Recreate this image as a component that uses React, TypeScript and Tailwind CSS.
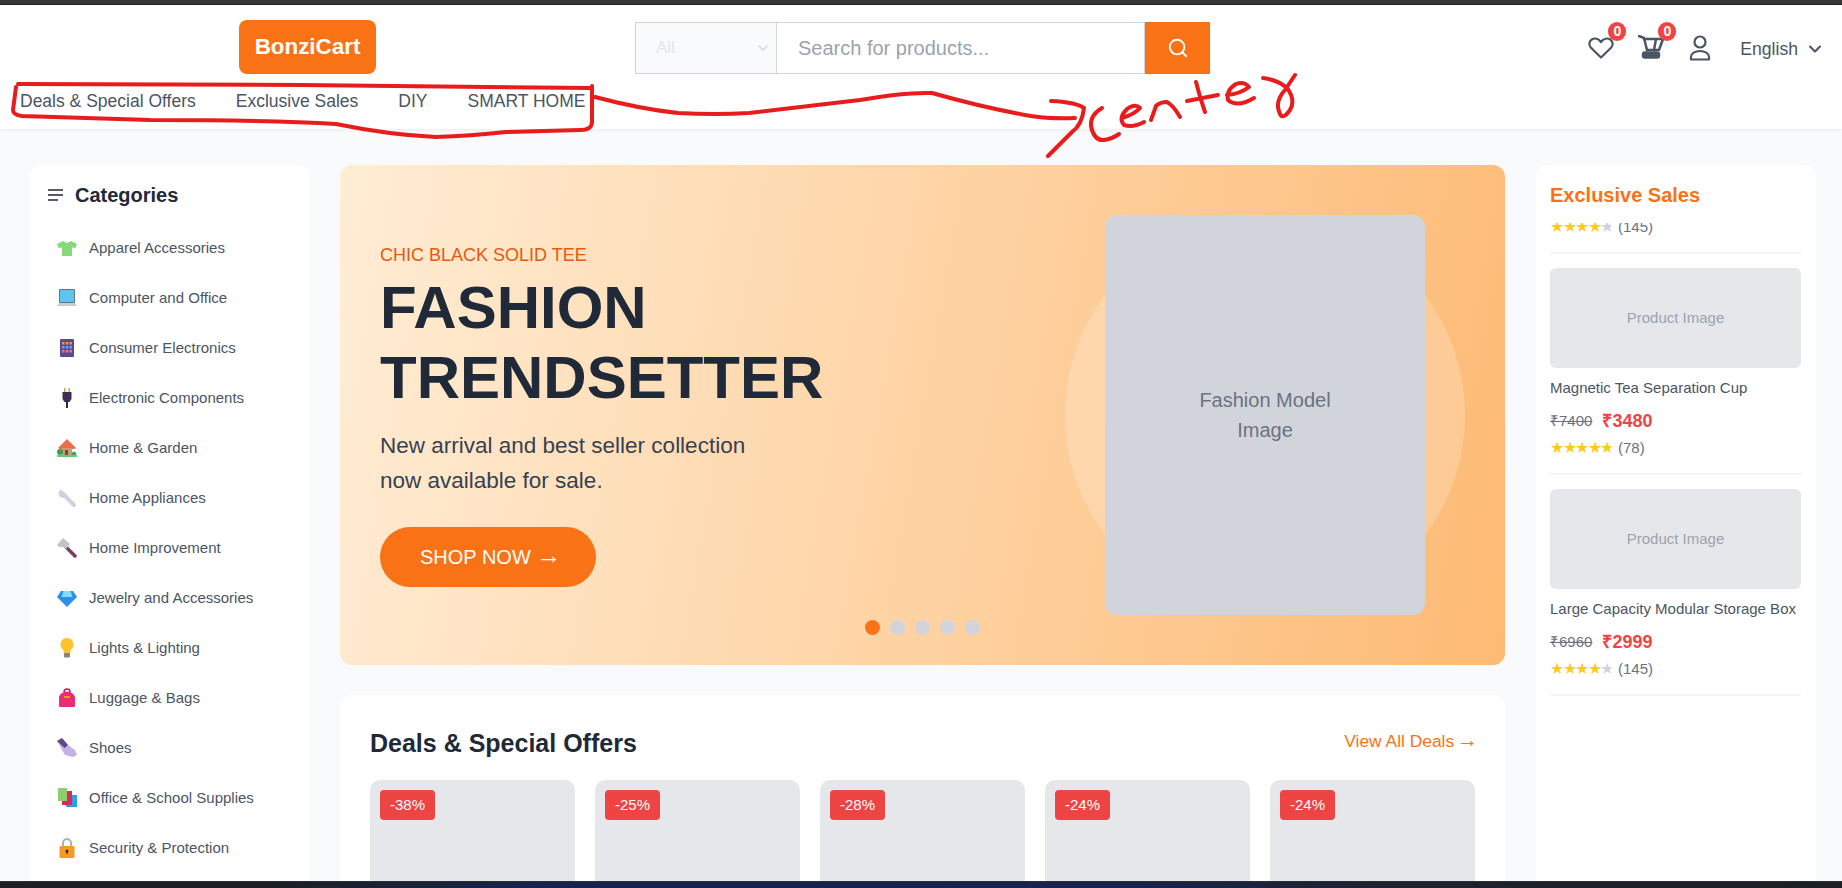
import { Search, ChevronDown } from 'lucide-react';

const categories: { name: string; icon: React.ReactNode }[] = [
  {
    name: 'Apparel Accessories',
    icon: <path d="M6 3 0 6l1.500 4L5 9.500V18h10V9.500l3.500.5L20 6l-6-3-4 2z" fill="#86d97a" />,
  },
  {
    name: 'Computer and Office',
    icon: (
      <>
        <rect x="2" y="1" width="16" height="14" rx="1" fill="#64748b" />
        <rect x="3" y="2" width="14" height="12" fill="#5cc4f0" />
        <path d="M2 15h16l2 3H0z" fill="#c9cbd6" />
      </>
    ),
  },
  {
    name: 'Consumer Electronics',
    icon: (
      <>
        <rect x="3" y="1" width="14" height="18" rx="1" fill="#5b4a93" />
        <path d="M5 4h2.500v2.500H5zM8.800 4h2.500v2.500H8.800zM12.500 4H15v2.500h-2.500z" fill="#f59e0b" />
        <path d="M5 8h2.500v2.500H5zM8.800 8h2.500v2.500H8.800zM12.500 8H15v2.500h-2.500z" fill="#60a5fa" />
        <path d="M5 12h2.500v2.500H5zM8.800 12h2.500v2.500H8.800zM12.500 12H15v2.500h-2.500z" fill="#f87171" />
      </>
    ),
  },
  {
    name: 'Electronic Components',
    icon: (
      <>
        <path d="M7 0h1.500v5H7zM11.500 0H13v5h-1.500z" fill="#d6a25a" />
        <path d="M5.500 4h9v7l-2 3h-5l-2-3z" fill="#3f2d56" />
        <rect x="9" y="13" width="2" height="7" fill="#2d2d38" />
      </>
    ),
  },
  {
    name: 'Home & Garden',
    icon: (
      <>
        <path d="M1 10 10 1l9 9-2 1H3z" fill="#ef6c4a" />
        <rect x="5" y="10" width="10" height="8" fill="#c99a6b" />
        <rect x="8" y="12" width="3" height="6" fill="#7a4a2b" />
        <rect x="12" y="11" width="2.500" height="2.500" fill="#5cc4f0" />
        <circle cx="3" cy="14" r="3" fill="#3f9b52" />
        <circle cx="17" cy="16" r="2.200" fill="#3f9b52" />
        <path d="M0 17h20v2H0z" fill="#5fce76" />
      </>
    ),
  },
  {
    name: 'Home Appliances',
    icon: (
      <>
        <path d="M5 5 17 17" stroke="#d4cfe0" strokeWidth="4" strokeLinecap="round" />
        <path d="M1 5 4 1l1.500 3L8 6l3-.5L7 10 3 9z" fill="#d4cfe0" />
      </>
    ),
  },
  {
    name: 'Home Improvement',
    icon: (
      <>
        <path d="M8 8 18 18" stroke="#7b3f54" strokeWidth="3.500" strokeLinecap="round" />
        <path d="M0 7 6 0l7 6-4 5-3-2.500-3 1z" fill="#c4c2cc" />
      </>
    ),
  },
  {
    name: 'Jewelry and Accessories',
    icon: (
      <>
        <path d="M4 3h12l4 6-10 10L0 9z" fill="#2f8fe8" />
        <path d="M6.500 3h7l2 6H4.500z" fill="#7fdcfb" />
      </>
    ),
  },
  {
    name: 'Lights & Lighting',
    icon: (
      <>
        <path d="M10 0a6.500 6.500 0 0 1 3.500 12V15h-7v-3A6.500 6.500 0 0 1 10 0z" fill="#fbc531" />
        <rect x="7" y="15" width="6" height="4.500" rx="1" fill="#8d7a9e" />
      </>
    ),
  },
  {
    name: 'Luggage & Bags',
    icon: (
      <>
        <path d="M7 4a3 3 0 0 1 6 0" fill="none" stroke="#c2185b" strokeWidth="1.500" />
        <path d="M2 10a8 6.500 0 0 1 16 0v8a1 1 0 0 1-1 1H3a1 1 0 0 1-1-1z" fill="#ec2a77" />
        <rect x="7" y="8" width="6" height="2" fill="#f59e0b" />
      </>
    ),
  },
  {
    name: 'Shoes',
    icon: (
      <>
        <path d="M0 3 5 0l6 7 7 5 2 5-4 2-8-2z" fill="#c4b0e4" />
        <path d="M0 3 5 0l6 7-3.500 3z" fill="#5f4b8b" />
      </>
    ),
  },
  {
    name: 'Office & School Supplies',
    icon: (
      <>
        <rect x="9" y="7" width="11" height="12" fill="#2f9ee8" />
        <rect x="5" y="3" width="10" height="14" fill="#d82b5c" />
        <rect x="1" y="0" width="9" height="13" fill="#8ccf6b" />
      </>
    ),
  },
  {
    name: 'Security & Protection',
    icon: (
      <>
        <path d="M6 9V5a4 4 0 0 1 8 0v4" fill="none" stroke="#b3b0bd" strokeWidth="2" />
        <rect x="2.500" y="8" width="15" height="12" rx="1" fill="#f59a23" />
        <circle cx="10" cy="13" r="1.500" fill="#3b2a20" />
        <rect x="9.400" y="13" width="1.200" height="3" fill="#3b2a20" />
      </>
    ),
  },
];

const navLinks = ['Deals & Special Offers', 'Exclusive Sales', 'DIY', 'SMART HOME'];
const discounts = ['-38%', '-25%', '-28%', '-24%', '-24%'];

const sideProducts = [
  { name: 'Magnetic Tea Separation Cup', oldPrice: '₹7400', price: '₹3480', stars: 5, reviews: 78 },
  { name: 'Large Capacity Modular Storage Box', oldPrice: '₹6960', price: '₹2999', stars: 4, reviews: 145 },
];

function Rating({ stars, reviews }: { stars: number; reviews: number }) {
  return (
    <div className="flex items-center h-5 text-[15px] text-[#6b7280]">
      <span className="text-[16px] leading-5 tracking-[-1.400px] text-[#facc15] w-[61px] overflow-hidden whitespace-nowrap">
        {'★'.repeat(stars)}
        <span className="text-[#d1d5db]">{'★'.repeat(5 - stars)}</span>
      </span>
      <span className="ml-[7px]">({reviews})</span>
    </div>
  );
}

function Annotation() {
  return (
    <svg
      className="absolute inset-0 pointer-events-none"
      width="1842"
      height="888"
      fill="none"
      stroke="#e81c1c"
      strokeWidth="4"
      strokeLinecap="round"
      strokeLinejoin="round"
    >
      <path d="M18 84 L300 85 L591 88" />
      <path d="M16 87 L13 110 Q13 115 22 116 L150 120 Q270 120 336 124 Q390 135 436 137 Q470 136 506 132 L580 130 Q592 130 592 122 L592 86" />
      <path d="M595 97 Q640 109 678 113 Q715 115 749 113 L860 100 Q905 92 932 93 Q985 108 1031 116 Q1050 119 1075 118" />
      <path d="M1051 101 Q1075 102 1084 108 Q1082 125 1072 132 L1048 156" />
      <path d="M1102 108 Q1090 115 1091 126 Q1094 141 1104 140 Q1112 139 1119 134" />
      <path d="M1122 118 Q1135 114 1140 108 Q1135 103 1127 109 Q1118 118 1124 125 Q1133 128 1144 122" />
      <path d="M1151 120 L1156 106 Q1160 102 1167 102 Q1173 105 1180 117" />
      <path d="M1196 82 Q1200 98 1205 112 M1187 101 L1218 95" />
      <path d="M1227 95 Q1240 94 1249 87 Q1244 81 1236 84 Q1226 90 1228 100 Q1237 108 1254 98" />
      <path d="M1263 78 Q1278 80 1287 88 Q1296 100 1290 110 Q1283 120 1280 114 Q1274 102 1285 90 L1295 75" />
    </svg>
  );
}

export default function App() {
  return (
    <div className="relative w-full h-[888px] overflow-hidden flex flex-col bg-[#f9fafb] font-['Liberation_Sans',Arial,sans-serif]">
      <div className="h-[5px] shrink-0 bg-[#37363b] border-b border-[#202124]" />

      {/* Header */}
      <header className="h-[125px] shrink-0 bg-white border-b border-[#f0f1f3] shadow-[0_1px_3px_rgba(0,0,0,0.04)] px-5">
        <div className="flex items-center pt-[14px] h-[70px]">
          <div className="w-[575px] flex justify-center">
            <a className="w-[137px] h-[54px] rounded-lg bg-[#f97316] text-white font-bold text-[22.400px] flex items-center justify-center">
              BonziCart
            </a>
          </div>
          <div className="ml-[40px] w-[575px] h-[52px] mt-[2px] flex">
            <div className="w-[141px] flex items-center justify-between pl-[20px] pr-[5px] bg-[#f9fafb] border border-[#d1d5db] border-r-0 text-[#e5e7eb] text-[17px]">
              All
              <ChevronDown size={16} className="text-[#d1d5db]" />
            </div>
            <div className="flex-1 flex items-center pl-[21px] border border-[#d1d5db] text-[20px] text-[#9ca3af]">
              Search for products...
            </div>
            <button className="w-[65px] bg-[#f97316] flex items-center justify-center">
              <Search size={22} strokeWidth={2} className="text-white" />
            </button>
          </div>
          <div className="ml-auto flex items-center text-[#4b5563]">
            <div className="relative mt-[3px]">
              <svg width="26" height="24" viewBox="0 0 26 24" fill="none" stroke="#4b5563" strokeWidth="2.200" strokeLinejoin="round" className="block">
                <path d="M13 21.500 3 11.800C.500 9 1 5.200 3.800 3.500 6.700 1.800 10.500 2.500 13 6.200 15.500 2.500 19.300 1.800 22.200 3.500 25 5.200 25.500 9 23 11.800z" />
              </svg>
              <span className="absolute -top-[14px] -right-[12px] w-[18px] h-[19px] rounded-full bg-[#ef4444] text-white text-[14px] font-bold flex items-center justify-center">0</span>
            </div>
            <div className="relative ml-[24px] mt-[1px]">
              <svg width="26" height="24" viewBox="0 0 26 24" className="block" fill="none" stroke="#4b5563" strokeWidth="2.500" strokeLinejoin="round" strokeLinecap="round">
                <path d="M1 1l5 2 3 12" />
                <path d="M6 4h19l-4 11H9" />
                <path d="M18 4l-2 11" />
                <rect x="5" y="17.500" width="16" height="5" rx="2" fill="#4b5563" />
              </svg>
              <span className="absolute -top-[13px] -right-[12px] w-[18px] h-[19px] rounded-full bg-[#ef4444] text-white text-[14px] font-bold flex items-center justify-center">0</span>
            </div>
            <svg width="22" height="26" viewBox="0 0 22 26" className="ml-[25px] mt-[2px]" fill="none" stroke="#4b5563" strokeWidth="2.200" strokeLinejoin="round">
              <circle cx="11" cy="7" r="5.500" />
              <path d="M2 24.500v-2.500c0-3.500 4-6 9-6s9 2.500 9 6v2.500z" />
            </svg>
            <span className="ml-[29px] mt-[4px] text-[17.600px]">English</span>
            <ChevronDown size={20} strokeWidth={2.500} className="ml-[7px] -mr-[3px] mt-[4px]" />
          </div>
        </div>
        <nav className="flex items-center gap-10 h-[32px] mt-[10px] text-[17.500px] text-[#4b5563]">
          {navLinks.map((link) => (
            <a key={link}>{link}</a>
          ))}
        </nav>
      </header>

      {/* Main */}
      <main className="flex-1 min-h-0 flex gap-[30px] pl-[30px] pr-[26px] pt-[35px]">
        <aside className="w-[280px] shrink-0 bg-white rounded-t-xl pl-[18px]">
          <div className="flex items-center h-[60px] -mb-[2px]">
            <svg width="15" height="12" viewBox="0 0 15 12" stroke="#1f2937" strokeWidth="1.600" className="mr-[12px]">
              <path d="M0 1h15M0 6h15M0 11h10" />
            </svg>
            <h2 className="text-[20px] font-bold text-[#1f2937]">Categories</h2>
          </div>
          <ul>
            {categories.map((cat) => (
              <li key={cat.name} className="h-[50px] flex items-center text-[15px] text-[#4b5563]">
                <svg width="20" height="20" viewBox="0 0 20 20" className="ml-[9px] mr-[12px] shrink-0">
                  {cat.icon}
                </svg>
                {cat.name}
              </li>
            ))}
          </ul>
        </aside>

        <div className="flex-1 min-w-0">
          {/* Hero */}
          <section className="relative h-[500px] rounded-xl flex items-center justify-between pl-[40px] pr-[40px] bg-[linear-gradient(100deg,#ffedd5,#fdba74)]">
            <div className="mb-[1px]">
              <p className="text-[18px] leading-[27px] text-[#ea580c]">CHIC BLACK SOLID TEE</p>
              <h1 className="text-[60px] leading-[70px] font-bold text-[#1f2937] mt-[4px]">
                FASHION
                <br />
                TRENDSETTER
              </h1>
              <p className="text-[22.500px] leading-[35px] text-[#374151] mt-[15px]">
                New arrival and best seller collection
                <br />
                now available for sale.
              </p>
              <button className="mt-[29px] w-[216px] h-[60px] rounded-full bg-[#f97316] text-white text-[20px] text-left pl-[40px]">
                SHOP NOW <span className="text-[25px] leading-none">→</span>
              </button>
            </div>
            <div className="relative w-[400px] h-[400px] flex items-center justify-center">
              <div className="absolute inset-0 rounded-full bg-white/20" />
              <div className="relative w-[320px] h-[400px] rounded-xl bg-[#d1d5db] flex items-center justify-center text-center text-[20px] leading-[30px] text-[#6b7280]">
                Fashion Model
                <br />
                Image
              </div>
            </div>
            <div className="absolute bottom-[30px] left-0 right-0 flex justify-center gap-[10px]">
              <span className="w-[15px] h-[15px] rounded-full bg-[#f97316]" />
              <span className="w-[15px] h-[15px] rounded-full bg-[#d1d5db]" />
              <span className="w-[15px] h-[15px] rounded-full bg-[#d1d5db]" />
              <span className="w-[15px] h-[15px] rounded-full bg-[#d1d5db]" />
              <span className="w-[15px] h-[15px] rounded-full bg-[#d1d5db]" />
            </div>
          </section>

          {/* Deals */}
          <section className="mt-[30px] bg-white rounded-t-xl px-[30px] pt-[34px] h-[300px]">
            <div className="flex items-center justify-between h-[30px]">
              <h2 className="text-[25px] font-bold text-[#1f2937]">Deals &amp; Special Offers</h2>
              <a className="text-[17.400px] text-[#f97316] -mt-[6px] -mr-[3px]">
                View All Deals <span className="text-[21px] leading-none -ml-[2px]">→</span>
              </a>
            </div>
            <div className="grid grid-cols-5 gap-5 mt-[21px]">
              {discounts.map((discount, i) => (
                <div key={i} className="h-[200px] rounded-[10px] bg-[#e5e7eb] p-[10px]">
                  <span className="inline-flex w-[55px] h-[30px] items-center justify-center rounded bg-[#ef4444] text-white text-[15px]">
                    {discount}
                  </span>
                </div>
              ))}
            </div>
          </section>
        </div>

        <aside className="w-[280px] ml-[1px] shrink-0 bg-white rounded-t-xl pl-[14px] pr-[15px]">
          <h2 className="text-[20px] font-bold text-[#f97316] h-[58px] leading-[60px]">Exclusive Sales</h2>
          <div className="overflow-hidden">
            <div className="-mt-[6px] pb-[15px] border-b-2 border-[#f3f4f6]">
              <Rating stars={4} reviews={145} />
            </div>
            {sideProducts.map((product) => (
              <div key={product.name} className="pt-[14px] pb-[15px] border-b-2 border-[#f3f4f6]">
                <div className="h-[100px] rounded-md bg-[#e5e7eb] flex items-center justify-center text-[15px] text-[#9ca3af]">
                  Product Image
                </div>
                <p className="mt-[10px] text-[15px] leading-5 text-[#4b5563] whitespace-nowrap">{product.name}</p>
                <div className="flex items-center h-[24px] mt-[11px]">
                  <s className="text-[15px] text-[#6b7280]">{product.oldPrice}</s>
                  <span className="ml-[10px] text-[18px] font-bold text-[#ef4444]">{product.price}</span>
                </div>
                <div className="mt-[5px]">
                  <Rating stars={product.stars} reviews={product.reviews} />
                </div>
              </div>
            ))}
          </div>
        </aside>
      </main>

      <div className="h-[7px] shrink-0 bg-[linear-gradient(90deg,#1c2026_15%,#14244f_30%,#16244f_60%,#1e2230_75%,#1c2026)] border-t border-[#2b2f36]" />

      <Annotation />
    </div>
  );
}
